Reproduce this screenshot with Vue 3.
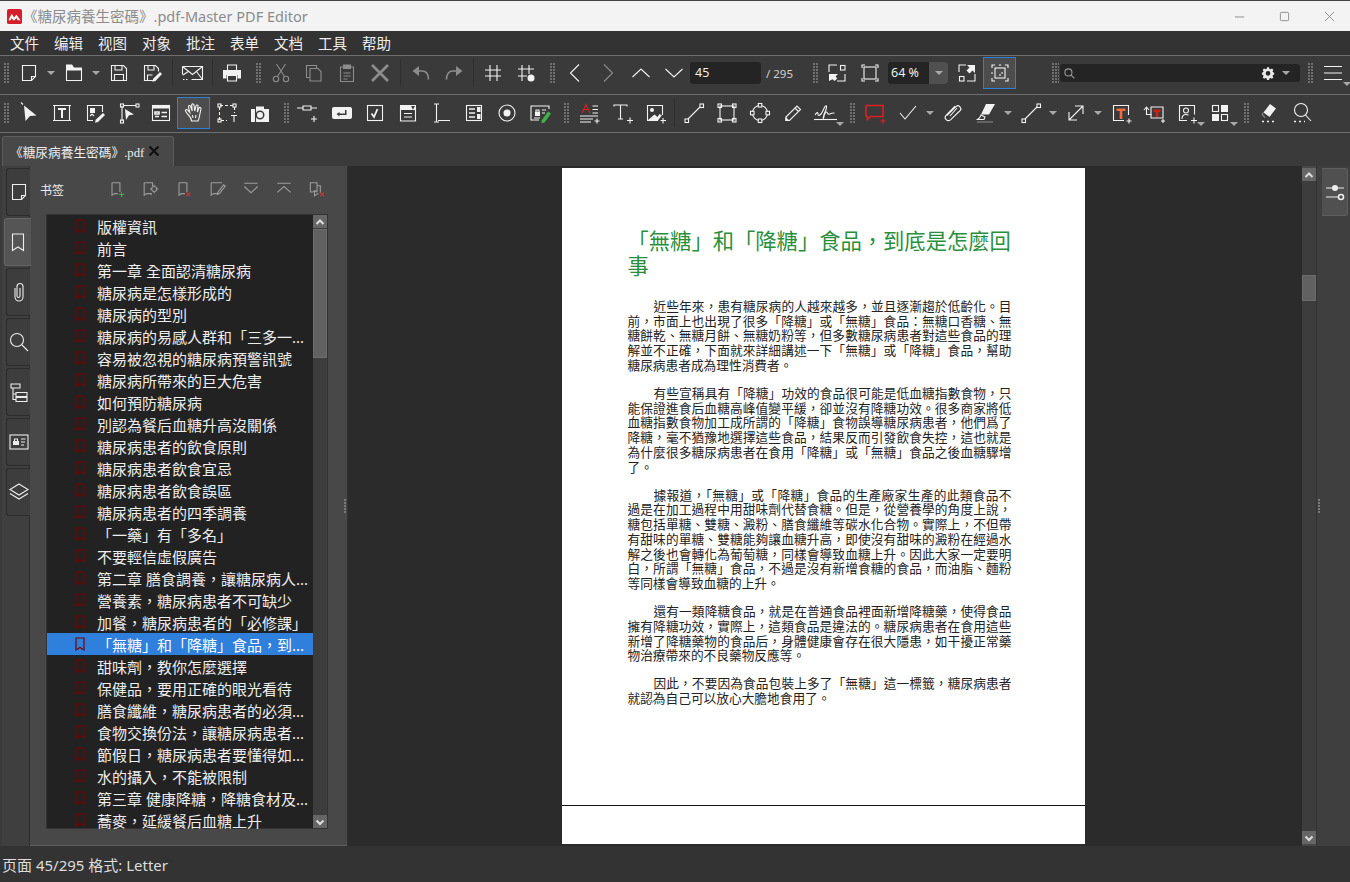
<template>
  <div class="app">
    <header class="titlebar">
      <svg class="logo" viewBox="0 0 16 16">
        <rect width="16" height="16" rx="2" fill="#d3202a" />
        <path d="M1.500 12 5 5l2.500 4L10 6l4.500 6h-3L10 9.500 8 12H6.500L5 9.500 3.800 12z" fill="#fff" />
      </svg>
      <span class="title">《糖尿病養生密碼》.pdf-Master PDF Editor</span>
      <div class="winctl">
        <svg viewBox="0 0 12 12"><path d="M1 6.500h10" /></svg>
        <svg viewBox="0 0 12 12"><rect x="1.500" y="1.500" width="9" height="9" rx="1" /></svg>
        <svg viewBox="0 0 12 12"><path d="M1 1l10 10M11 1 1 11" /></svg>
      </div>
    </header>

    <nav class="menubar">
      <span v-for="m in menus" :key="m">{{ m }}</span>
    </nav>

    <div class="toolbar toolbar-one">
      <template v-for="(it, i) in toolbarOne" :key="i">
        <span v-if="it === '|'" class="sep"></span>
        <span v-else-if="it === '!'" class="sep narrow"></span>
        <span v-else-if="it === ':'" class="grip"></span>
        <span v-else-if="it === 'v'" class="dd"></span>
        <div v-else-if="it === 'page'" class="pagebox">
          <div class="field pagefield">45</div>
          <span class="pagecount">/ 295</span>
          <span class="grip grip-page"></span>
        </div>
        <div v-else-if="it === 'zoom'" class="zoomcombo">
          <span class="zoomval">64 %</span>
          <span class="zoombtn"><span class="dd"></span></span>
        </div>
        <div v-else-if="it === 'search'" class="searchwrap">
          <span class="grip grip-search"></span>
          <div class="field searchbox">
            <svg class="ico-s" viewBox="0 0 24 24" fill="none" stroke="currentColor" stroke-width="2" v-html="icons.search"></svg>
            <svg class="gear" viewBox="0 0 24 24" v-html="icons.gear"></svg>
            <span class="dd"></span>
          </div>
          <span class="grip grip-end"></span>
          <span class="btn burger">
            <svg class="ico" viewBox="0 0 24 24" fill="none" stroke="currentColor" stroke-width="1.100" v-html="icons.burger"></svg>
            <span class="dd dd-corner"></span>
          </span>
        </div>
        <span v-else class="btn" :class="{ active: it.endsWith('*'), dim: it.endsWith('~') }">
          <svg class="ico" viewBox="0 0 24 24" fill="none" stroke="currentColor" stroke-width="1.100" v-html="icons[it.replace(/[*~]$/, '')]"></svg>
        </span>
      </template>
    </div>

    <div class="toolbar toolbar-two">
      <template v-for="(it, i) in toolbarTwo" :key="i">
        <span v-if="it === '!'" class="sep narrow"></span>
        <span v-else-if="it === ':'" class="grip"></span>
        <span v-else-if="it === 'v'" class="dd"></span>
        <span v-else class="btn" :class="{ active: it.endsWith('*') }">
          <svg class="ico" viewBox="0 0 24 24" fill="none" stroke="currentColor" stroke-width="1.100" v-html="icons[it.replace(/[*~]$/, '')]"></svg>
          <span v-if="cornerDrop.includes(it)" class="dd dd-corner"></span>
        </span>
      </template>
    </div>

    <div class="tabrow">
      <div class="tab">
        <span>《糖尿病養生密碼》.pdf</span>
        <svg class="tabclose" viewBox="0 0 12 12"><path d="M1.500 1.500l9 9M10.500 1.500l-9 9" /></svg>
      </div>
    </div>

    <main class="main">
      <aside class="rail">
        <span v-for="r in railIcons" :key="r" class="railtab" :class="{ on: r === 'bookmark' }">
          <svg class="ico" viewBox="0 0 24 24" fill="none" stroke="currentColor" stroke-width="1.100" v-html="icons[r]"></svg>
        </span>
      </aside>

      <section class="panel">
        <div class="panelhead">
          <span class="paneltitle">书签</span>
          <div class="panelbtns">
            <svg v-for="p in panelIcons" :key="p" class="pico" viewBox="0 0 24 24" fill="none" stroke="currentColor" stroke-width="1.300" v-html="icons[p]"></svg>
          </div>
        </div>
        <div class="tree">
          <ul class="rows">
            <li v-for="(b, i) in bookmarks" :key="i" class="row" :class="{ sel: i === 19 }">
              <svg class="bm" viewBox="0 0 10 14"><path d="M1 1h8v12L5 10.500 1 13z" /></svg>
              <span>{{ b }}</span>
            </li>
          </ul>
          <div class="vbar">
            <span class="sbtn"><svg viewBox="0 0 12 12"><path d="M2.500 8 6 4.500 9.500 8" /></svg></span>
            <span class="sthumb tree-thumb"></span>
            <span class="strack"></span>
            <span class="sbtn"><svg viewBox="0 0 12 12"><path d="M2.500 4.500 6 8l3.500-3.500" /></svg></span>
          </div>
        </div>
        <span class="splitdots"></span>
      </section>

      <section class="doc">
        <article class="page">
          <h1 class="heading">{{ headingOne }}<br />事</h1>
          <div v-for="(para, i) in paragraphs" :key="i" class="para">
            <div
              v-for="(line, j) in para"
              :key="j"
              class="line"
              :class="{ first: j === 0, full: j < para.length - 1 }"
            >{{ line }}</div>
          </div>
        </article>
        <div class="nextpage"></div>
      </section>

      <div class="vbar docbar">
        <span class="sbtn"><svg viewBox="0 0 12 12"><path d="M2.500 8 6 4.500 9.500 8" /></svg></span>
        <span class="strack short"></span>
        <span class="sthumb doc-thumb"></span>
        <span class="strack"></span>
        <span class="sbtn"><svg viewBox="0 0 12 12"><path d="M2.500 4.500 6 8l3.500-3.500" /></svg></span>
      </div>

      <aside class="rightrail">
        <span class="splitdots right"></span>
        <span class="railtab righttab">
          <svg class="ico" viewBox="0 0 24 24" fill="none" stroke="currentColor" stroke-width="1.100" v-html="icons.sliders"></svg>
        </span>
      </aside>
    </main>

    <footer class="status">页面 45/295 格式: Letter</footer>
  </div>
</template>

<script setup>
const menus = ['文件', '编辑', '视图', '对象', '批注', '表单', '文档', '工具', '帮助']

const toolbarOne = [
  ':', 'new', 'v', 'open', 'v', 'save', 'saveas', '|', 'mail', '!', 'print', ':',
  'cut~', 'copy~', 'paste~', 'del~', '|', 'undo~', 'redo~', '!', 'grid', 'griddot', ':',
  'left', 'right~', 'up', 'down', 'page', 'fitw', 'fit', 'zoom', 'fullscreen', 'actual*', 'search'
]

const toolbarTwo = [
  ':', 'arrow', 'textbox', 'editimg', 'vertex', 'form', 'hand*', 'crop', 'camera', ':',
  'link', 'button', 'check', 'combo', 'field', 'list', 'radio', 'secure', ':',
  'addtext', 'typewriter', 'addimg', '!', 'line', 'rect', 'circle', 'pencil', 'sign', ':',
  'comment', 'tick', 'v', 'clip', 'marker', 'v', 'line', 'v', 'double', 'v',
  'redT', 'cropT', 'stamp', 'tiles', ':', 'eraser', 'findtool'
]

const cornerDrop = ['sign', 'stamp', 'tiles']

const railIcons = ['new', 'bookmark', 'paperclip', 'search', 'tree', 'idcard', 'layers']

const panelIcons = ['bmadd', 'bmgo', 'bmdel', 'bmedit', 'downbar', 'upbar', 'bmcopy']

const fill = 'fill="currentColor" stroke="none"'
const corners = 'M4 7V4h3M17 4h3v3M20 17v3h-3M7 20H4v-3'

const icons = {
  new: '<path d="M5.500 4.500h13v11l-4 4h-9z"/><path d="M18.500 15.500h-4v4"/>',
  open: `<path d="M4.500 9h15v10.500h-15z"/><path ${fill} d="M4 3.500h6l2 3h8V9H4z"/>`,
  save: '<path d="M4.500 4.500h12l3 3v12h-15z"/><path d="M8 4.500V9h7V4.500M7.500 19.500v-6h9v6"/>',
  saveas: `<path d="M13 19.500H4.500v-15h11l3 3v3"/><path d="M8 4.500V9h6V4.500M7.500 19v-5h5"/><path ${fill} d="M20 11l2 2-6.500 7-3 .8.700-3z"/>`,
  mail: '<path d="M1.500 5.500h20v13h-11"/><path d="M1.500 5.500v8M1.500 5.500l10 8 10-8M21.500 18.500 15 10M8 10 2 14"/><path stroke-dasharray="1.500 1.500" d="M2 18.500h6"/>',
  print: `<path d="M7.500 9V4h9v5"/><path ${fill} d="M3 9h18v8.500h-3.500V14h-11v3.500H3z"/><path d="M7.500 14.500h9V20h-9z"/>`,
  cut: '<circle cx="7" cy="18" r="2.700"/><circle cx="17" cy="18" r="2.700"/><path d="M8.500 15.500 16.500 3M15.500 15.500 7.500 3"/>',
  copy: '<path d="M14.500 7V4.500h-10v12H8"/><path d="M8 7.500h8l3 3v9.500H8z"/>',
  paste: `<path d="M8 6H5.500v14.500h13V6H16"/><path ${fill} d="M8 3.500h8V8H8z"/><path d="M8.500 12h7M8.500 15h7M8.500 18h4"/>`,
  del: '<path stroke-width="2.800" d="M4 4l16 16M20 4 4 20"/>',
  undo: `<path d="M9 10h4c4 0 6.500 3 6.500 8.500" stroke-width="1.600"/><path ${fill} d="M10 5v10L3.500 10z"/>`,
  redo: `<path d="M15 10h-4c-4 0-6.500 3-6.500 8.500" stroke-width="1.600"/><path ${fill} d="M14 5v10l6.500-5z"/>`,
  grid: '<path d="M9 4v16M16 4v16M4 9h16M4 15h16"/>',
  griddot: `<path d="M8 4v16M15 4v9M4 8h16M4 15h9"/><circle ${fill} cx="17" cy="17" r="3.500"/>`,
  left: '<path d="M16 3.500 7.500 12l8.500 8.500"/>',
  right: '<path d="M8 3.500 16.500 12 8 20.500"/>',
  up: '<path d="M3.500 16 12 8l8.500 8"/>',
  down: '<path d="M3.500 8 12 16l8.500-8"/>',
  upbar: '<path d="M4 5h16M4 16l8-7 8 7"/>',
  downbar: '<path d="M4 5h16M4 9l8 7.500L20 9"/>',
  fitw: `<path d="M4 11V4h8M20 13v7h-8"/><rect x="15.500" y="4.500" width="4.500" height="4.500"/><path ${fill} d="M4 13h9l-2.500 2.500 1.800 2L9.500 20 7.500 18.200 4 20z"/>`,
  fit: `<path d="${corners}"/><rect x="6" y="6" width="12" height="12"/>`,
  fullscreen: `<path d="M4 11V4h7M20 13v7h-8"/><rect x="4.500" y="15.500" width="4.500" height="4.500"/><path ${fill} d="M12 4h8v8l-2.500-2.500-3 3-3-3 3-3z"/>`,
  actual: `<path d="${corners}"/><rect x="7" y="7" width="10" height="10"/><path stroke-dasharray="2 8" d="M3 12h18M12 3v18"/>`,
  burger: '<path d="M3 5.500h18M3 12h18M3 18.500h18"/>',
  search: '<circle cx="10" cy="10" r="6.500"/><path d="M15 15l6 6"/>',
  gear: `<path fill="#e8e8e8" fill-rule="evenodd" d="M10 2h4l.6 3 2.400 1 2.600-1.700 2.800 2.800L20.700 9.700l1 2.300 2.300.6v3.800l-2.300.6-1 2.300 1.700 2.600-2.800 2.800-2.600-1.700-2.400 1-.6 3h-4l-.6-3-2.400-1-2.600 1.700-2.800-2.800 1.700-2.600-1-2.300L0 16.400v-3.800l2.300-.6 1-2.300L1.600 7.100l2.800-2.800L7 6l2.400-1zM12 9.500a4.500 4.500 0 1 0 0 9 4.500 4.500 0 0 0 0-9z" transform="translate(1.500 .3) scale(.88)"/>`,
  arrow: `<path ${fill} d="M7 4.500 19.500 14.500 13 15 8.500 20z"/><path d="M4 1.500l2 2"/>`,
  textbox: '<path d="M4.500 4v16M19.500 4v16M3 4.500h18M3 19.500h18"/><path stroke-width="2" d="M8 8h8M12 8v9"/>',
  editimg: `<path d="M19.500 11V4.500h-15v15H10"/><rect ${fill} x="7" y="7" width="5" height="5"/><path ${fill} d="M20 12l2 2-7 7-3 .8.700-3z"/><path d="M7 15l2-2 2 2"/>`,
  vertex: `<path d="M6 5v15M8 4.500h12"/><path ${fill} d="M9 8l9 5.500-5 .8-3 4.700z"/><rect x="4.500" y="3" width="3" height="3"/><rect x="20" y="3" width="3" height="3"/><rect x="4.500" y="19" width="3" height="3"/>`,
  form: `<rect x="3.500" y="4.500" width="17" height="15"/><path ${fill} d="M3.500 4.500h17v3h-17z"/><path stroke-width="1.600" d="M6 11h4v2H6zM6 15.500h4M12.500 11.500H18M12.500 15.500H18"/>`,
  hand: '<path d="M6.500 14c-1-1-2.500-3-3-4s1-2 2-1l2.300 2.500L6.500 6c-.3-1.500 1.500-2 2-.7l1.700 4.700-.5-6c0-1.500 2-1.500 2.300 0l.7 6L14 5c.3-1.500 2.300-1 2-.2l-.7 6.200 1.700-4c.5-1.200 2.200-.6 2 .6L17.500 15c-.5 3-1.500 5-1.500 5H9.500c0-2-1.500-4.500-3-6z"/><path d="M10.500 14l.5 3M14 14l-.5 3"/>',
  crop: '<path stroke-dasharray="3 2" d="M5 4.500h14M4.500 6v13M19.500 6v6M6 19.500h6"/><rect x="3" y="3" width="3" height="3"/><rect x="18" y="3" width="3" height="3"/><rect x="3" y="18" width="3" height="3"/><path d="M16 14.500h6M19 14.500V21"/>',
  camera: `<path ${fill} fill-rule="evenodd" d="M3 8h5V5.500h8V8h5v13H3zM12 9.500a4.500 4.500 0 1 0 0 9 4.500 4.500 0 0 0 0-9zM12 11a3 3 0 1 1 0 6 3 3 0 0 1 0-6z"/><path d="M7.500 8v13" stroke="#3a3a3a"/>`,
  link: '<path d="M0 7h6M14 7h6M6 5h8v4H6z"/><path d="M14 18h6M17 15v6"/>',
  button: `<path ${fill} fill-rule="evenodd" d="M4 6h16a2 2 0 0 1 2 2v8a2 2 0 0 1-2 2H4a2 2 0 0 1-2-2V8a2 2 0 0 1 2-2zM15 9v3.500H9.500V11L6.500 13l3 2.500V14H16.500V9z"/>`,
  check: '<rect x="4.500" y="4.500" width="15" height="15"/><path stroke-width="1.800" d="M8.500 12.500l2.500 3.500 3.500-8"/>',
  combo: `<path d="M4.500 6v14h15V6"/><path ${fill} d="M4 4h16v5H4z"/><path d="M8 12.500h8M8 16h8"/><path stroke="#3a3a3a" d="M16 5.500h2l-1 2z"/>`,
  field: '<path d="M5 3h5M7.500 3v18M5 21h5M9 19.500h12"/>',
  list: `<rect x="4.500" y="4.500" width="15" height="15"/><path stroke-width="1.500" d="M7 8h6M7 12h6M7 16h6"/><path ${fill} d="M15 6h3.500v5H15zM15 13h3.500v5H15z"/>`,
  radio: `<circle cx="12" cy="12" r="8"/><circle ${fill} cx="12" cy="12" r="3.500"/>`,
  secure: `<path d="M21 8V5H3v14h8"/><path ${fill} d="M7 10.500h5V15H7z"/><path d="M8 10.500V9h3v1.500M14 9h4M14 12h3M6 17h6"/><path fill="#3fb24c" stroke="none" d="M20 10.500l3 2-6.500 9-3 .8.300-3z"/>`,
  addtext: '<path stroke="#e02020" d="M5 12l4-8.500L13 12M6.500 8.500h5"/><path d="M15.500 5H21M15.500 8.500H21M15.500 12H21M3 15h18M3 18h13M3 21h11M17.500 20h5M20 17.500v5"/>',
  typewriter: '<path d="M4 5.500V4h13v1.500M10.500 4v14M8 18h5"/><path d="M17 19.500h6M20 16.500v6"/>',
  addimg: `<path d="M15 19.500H4.500v-15h15V14"/><circle ${fill} cx="9" cy="9" r="2"/><path ${fill} d="M4.500 19.500l7-6 3 2.500 2-3 2.500 1.500V14l-4 5.500z"/><path d="M17.500 19.500h5.500M20 17v5.500"/>`,
  line: '<rect x="3" y="18" width="3.500" height="3.500"/><rect x="18" y="3" width="3.500" height="3.500"/><path d="M6 18 18 6"/>',
  rect: '<rect x="5" y="5" width="14" height="14"/><rect x="3" y="3" width="3.500" height="3.500"/><rect x="17.500" y="3" width="3.500" height="3.500"/><rect x="3" y="17.500" width="3.500" height="3.500"/><rect x="17.500" y="17.500" width="3.500" height="3.500"/>',
  circle: '<circle cx="12" cy="12" r="7.500"/><rect x="10.300" y="2.500" width="3.500" height="3.500" fill="#3a3a3a"/><rect x="10.300" y="18" width="3.500" height="3.500" fill="#3a3a3a"/><rect x="2.500" y="10.300" width="3.500" height="3.500" fill="#3a3a3a"/><rect x="18" y="10.300" width="3.500" height="3.500" fill="#3a3a3a"/>',
  pencil: '<path d="M5 16 16 5l3.500 3.500-11 11H5zM14 7l3.500 3.500"/><path fill="currentColor" d="M5 19.500V17l2.500 2.500z"/>',
  sign: '<path d="M1 14c2-3 3-3 3-1s1 2 3 0 3-7 4.500-8 1.500 2-.5 6-2 8-1.500 6 2-6 3-6 1 3 3 2 2-1 5-1"/><path d="M0 18.500h23"/>',
  comment: '<path stroke="#e02020" stroke-width="1.500" d="M3 4.500h17v11H7.500l-3 3v-3H3z"/><path stroke="#e02020" d="M17.500 20h5M20 17.500v5"/>',
  tick: '<path d="M4 12l5 6L20 5"/>',
  clip: '<path d="M6 15 15 5c2-2 6 1.500 4 4l-9 10c-3 2.500-7-1-5-4l8.500-10" transform="rotate(4 12 12)"/><path d="M9 15l7-8"/>',
  paperclip: '<path d="M8 8v9a4 4 0 0 0 8 0V6.500a3 3 0 0 0-6 0V16a1.500 1.500 0 0 0 3 0V8"/>',
  marker: `<path ${fill} d="M12 3h9l-6 10.500H7z"/><path d="M7 14l-1.500 3-2 1.500h6.500L11 16z"/><path stroke="#888" d="M3 21h16"/>`,
  double: '<path d="M5 19 19 5M11 5h8v8M13 19H5v-8"/>',
  redT: `<path d="M4 4.500h16M4 19.500h11M4.500 4v16M19.500 4v10"/><path fill="#f06a3c" stroke="none" d="M7.500 7.500h9V10H13.300v8h-2.600v-8H7.500z"/><path d="M17.500 20h5M20 17.500v5"/>`,
  cropT: '<path d="M2 9l2.500-3L7 9M4.500 6v7.500h5"/><path d="M9 6h12v11H9z"/><path fill="#d02010" stroke="none" d="M11.500 8.500h7V11h-2.200v5h-2.600v-5h-2.200z"/><path d="M19 20h4M21 18v4"/>',
  stamp: '<path d="M4.500 4.500h15v9M4.500 4v16M4 19.500h8"/><circle cx="11" cy="9.500" r="2.500"/><path d="M7 18c0-3 2-4.500 4-4.500 1 0 2 .3 2.500.7"/><path d="M16 19.500h6M19 16.500v6"/>',
  tiles: `<rect x="4.500" y="4.500" width="6" height="6"/><rect ${fill} x="13" y="4" width="7" height="7"/><rect ${fill} x="4" y="13" width="7" height="7"/><rect x="13.500" y="13.500" width="6" height="6"/>`,
  eraser: `<path ${fill} d="M13 3l6 4.500-6.500 8.500-6-4.500z"/><path stroke="#888" d="M6.500 11.500 5 13.500l3 3"/><path stroke-dasharray="2 3" stroke-width="1.600" d="M5 20.500h14"/>`,
  findtool: '<circle cx="11" cy="9" r="6.500"/><path d="M15.500 14l5.500 6"/><path stroke-dasharray="2 3" stroke-width="1.600" d="M4 20.500h11"/>',
  bookmark: '<path d="M6.500 4h11v16.500L12 17l-5.500 3.500z"/>',
  tree: '<path d="M4 4h9v4H4zM9 12.500h11v4H9zM9 17.500h11v4H9zM6 8v11.500h3M6 14h3"/>',
  idcard: `<rect x="3" y="5" width="18" height="14"/><path ${fill} d="M6 11h6v4H6z"/><path d="M7.500 11V9h3v2M14 9h4.500M14 12h4M14 15h3"/>`,
  layers: '<path d="M12 4l9 5.500-9 5.500-9-5.500zM3 13.500 12 19l9-5.500"/>',
  sliders: `<path d="M3 8h18M3 17h14"/><circle ${fill} cx="12" cy="8" r="3"/><circle fill="#4a4a4a" cx="18" cy="17" r="2.500" stroke-width="1.600"/>`,
  bmadd: '<path d="M6 4.500h9.500v11M6 4.500v15l3-2h4"/><path stroke="#3fb24c" d="M14.500 18.500h6M17.500 15.500v6"/>',
  bmgo: '<path d="M5 4.500h10v4M5 4.500v15l3-2h5.500v2"/><circle cx="17" cy="12" r="3"/><path d="M12 12h2M20 12h2M17 7v2M17 15v2"/>',
  bmdel: '<path d="M6 4.500h9.500v11M6 4.500v15l3-2h4"/><path stroke="#d83030" d="M15 16l4.500 4.500M19.500 16 15 20.500"/>',
  bmedit: '<path d="M5 4.500h13M5 4.500v15l3-2h6"/><path d="M13 16l7-9 2 1.500-7 9-2.500 1z"/>',
  bmcopy: '<path d="M4 4.500h8v11l-2.500-1.500L7 15.500H4zM12 8h4v9M9 15v5l3-2h2"/><path stroke="#d83030" d="M16 16l4.500 4.500M20.500 16 16 20.500"/>'
}

// the book's text is set with full-width CJK punctuation
const cjk = (s) => s.replace(/,/g, '\uFF0C').replace(/:/g, '\uFF1A')

const headingOne = cjk('「無糖」和「降糖」食品,到底是怎麼回')

const bookmarks = [
  '版權資訊', '前言', '第一章 全面認清糖尿病', '糖尿病是怎樣形成的', '糖尿病的型別',
  '糖尿病的易感人群和「三多一...', '容易被忽視的糖尿病預警訊號', '糖尿病所帶來的巨大危害', '如何預防糖尿病',
  '別認為餐后血糖升高沒關係', '糖尿病患者的飲食原則', '糖尿病患者飲食宜忌', '糖尿病患者飲食誤區',
  '糖尿病患者的四季調養', '「一藥」有「多名」', '不要輕信虛假廣告', '第二章 膳食調養,讓糖尿病人...',
  '營養素,糖尿病患者不可缺少', '加餐,糖尿病患者的「必修課」', '「無糖」和「降糖」食品,到...',
  '甜味劑,教你怎麼選擇', '保健品,要用正確的眼光看待', '膳食纖維,糖尿病患者的必須...',
  '食物交換份法,讓糖尿病患者...', '節假日,糖尿病患者要懂得如...', '水的攝入,不能被限制',
  '第三章 健康降糖,降糖食材及...', '蕎麥,延緩餐后血糖上升'
].map(cjk)

const paragraphs = [
  [
    '近些年來,患有糖尿病的人越來越多,並且逐漸趨於低齡化。目',
    '前,市面上也出現了很多「降糖」或「無糖」食品:無糖口香糖、無',
    '糖餅乾、無糖月餅、無糖奶粉等,但多數糖尿病患者對這些食品的理',
    '解並不正確,下面就來詳細講述一下「無糖」或「降糖」食品,幫助',
    '糖尿病患者成為理性消費者。'
  ],
  [
    '有些宣稱具有「降糖」功效的食品很可能是低血糖指數食物,只',
    '能保證進食后血糖高峰值變平緩,卻並沒有降糖功效。很多商家將低',
    '血糖指數食物加工成所謂的「降糖」食物誤導糖尿病患者,他們爲了',
    '降糖,毫不猶豫地選擇這些食品,結果反而引發飲食失控,這也就是',
    '為什麼很多糖尿病患者在食用「降糖」或「無糖」食品之後血糖驟增',
    '了。'
  ],
  [
    '據報道,「無糖」或「降糖」食品的生產廠家生產的此類食品不',
    '過是在加工過程中用甜味劑代替食糖。但是,從營養學的角度上說,',
    '糖包括單糖、雙糖、澱粉、膳食纖維等碳水化合物。實際上,不但帶',
    '有甜味的單糖、雙糖能夠讓血糖升高,即使沒有甜味的澱粉在經過水',
    '解之後也會轉化為葡萄糖,同樣會導致血糖上升。因此大家一定要明',
    '白,所謂「無糖」食品,不過是沒有新增食糖的食品,而油脂、麵粉',
    '等同樣會導致血糖的上升。'
  ],
  [
    '還有一類降糖食品,就是在普通食品裡面新增降糖藥,使得食品',
    '擁有降糖功效,實際上,這類食品是違法的。糖尿病患者在食用這些',
    '新增了降糖藥物的食品后,身體健康會存在很大隱患,如干擾正常藥',
    '物治療帶來的不良藥物反應等。'
  ],
  [
    '因此,不要因為食品包裝上多了「無糖」這一標籤,糖尿病患者',
    '就認為自己可以放心大膽地食用了。'
  ]
].map((para) => para.map(cjk))
</script>

<style>
html, body { margin: 0; background: #3a3a3a; }
</style>

<style scoped>
.app {
  width: 1350px;
  height: 882px;
  display: flex;
  flex-direction: column;
  overflow: hidden;
  background: #3a3a3a;
  color: #eee;
  font-family: "Noto Sans", "Noto Sans CJK TC", sans-serif;
}

.titlebar {
  height: 30px;
  flex: none;
  display: flex;
  align-items: center;
  background: #f3f3f3;
  border-top: 1px solid #444;
  color: #8b8b8b;
}

.logo { width: 15px; height: 15px; margin: 0 3px 0 7px; }
.title { font-size: 14.500px; margin-left: -2px; padding-bottom: 2px; }

.winctl { margin-left: auto; display: flex; gap: 34px; padding-right: 15px; }
.winctl svg { width: 11px; height: 11px; fill: none; stroke: #8a8a8a; stroke-width: 1; }

.menubar {
  height: 24px;
  flex: none;
  display: flex;
  align-items: center;
  gap: 15px;
  padding: 0 0 2px 10px;
  box-sizing: border-box;
  background: #333;
  font-family: "Noto Sans CJK SC", sans-serif;
  font-size: 14.500px;
}

.toolbar {
  height: 39px;
  flex: none;
  display: flex;
  align-items: center;
  box-sizing: border-box;
  border-top: 1px solid #6e6e6e;
  background: #3a3a3a;
}

.toolbar-one { padding-bottom: 4px; }
.toolbar-two { height: 38px; padding-bottom: 1px; }

.btn {
  width: 33px;
  height: 32px;
  flex: none;
  position: relative;
  display: flex;
  align-items: center;
  justify-content: center;
  color: #f2f2f2;
  box-sizing: border-box;
}

.btn.dim { color: #8c8c8c; }
.btn.active { background: #4d4d4d; border: 1px solid #2f7fd6; }

.ico { width: 24px; height: 24px; flex: none; }

.sep {
  width: 8px;
  height: 28px;
  flex: none;
  background: linear-gradient(#2f2f2f, #2f2f2f) center / 1px 100% no-repeat;
}

.sep.narrow { width: 6px; }

.dd {
  width: 12px;
  height: 10px;
  flex: none;
  position: relative;
}

.dd::after {
  content: "";
  position: absolute;
  left: 2px;
  top: 3px;
  border-left: 4px solid transparent;
  border-right: 4px solid transparent;
  border-top: 4px solid #a8a8a8;
}

.dd-corner { position: absolute; right: -4px; bottom: 0; }

.grip {
  width: 16px;
  height: 20px;
  flex: none;
  background-image: conic-gradient(from 270deg at 2px 2px, #707070 25%, transparent 0);
  background-size: 3px 3px;
  background-clip: content-box;
  background-origin: content-box;
  padding-left: 8px;
  padding-right: 3px;
  box-sizing: border-box;
}

.toolbar > .grip:first-child { width: 12px; padding-left: 4px; }

.field { background: #242424; border-radius: 3px; }

.pagebox { display: flex; align-items: center; flex: none; }
.pagefield {
  width: 71px;
  height: 22px;
  line-height: 22px;
  padding-left: 5px;
  box-sizing: border-box;
  font-size: 12.500px;
}
.pagecount { width: 36px; padding-left: 5px; box-sizing: border-box; font-size: 11.500px; color: #d0d0d0; }
.grip-page { width: 23px; padding-left: 16px; padding-right: 2px; }

.zoomcombo {
  width: 60px;
  height: 22px;
  margin: 0 2px;
  flex: none;
  display: flex;
  background: #242424;
  border-radius: 3px;
  overflow: hidden;
  font-size: 12.500px;
  line-height: 22px;
}
.zoomval { flex: 1; padding-left: 3px; }
.zoombtn { width: 19px; background: #505050; display: flex; align-items: center; justify-content: center; }

.searchwrap { flex: 1; display: flex; align-items: center; height: 100%; padding-left: 35px; }
.grip-search { width: 9px; padding-left: 1px; padding-right: 1px; }
.searchbox {
  width: 240px;
  height: 18px;
  flex: none;
  display: flex;
  align-items: center;
  padding: 0 8px 0 3px;
  box-sizing: border-box;
  color: #9a9a9a;
}
.ico-s { width: 13px; height: 13px; }
.gear { width: 14px; height: 14px; margin-left: auto; margin-right: 5px; }
.grip-end { width: 11px; margin-left: 4px; padding-left: 4px; padding-right: 2px; }
.burger { margin-left: 1px; }

.tabrow {
  height: 34px;
  flex: none;
  display: flex;
  align-items: flex-end;
  padding-left: 2px;
  box-sizing: border-box;
  border-top: 1px solid #6e6e6e;
}

.tab {
  width: 172px;
  height: 30px;
  display: flex;
  align-items: center;
  gap: 4px;
  padding-left: 7px;
  padding-bottom: 1px;
  box-sizing: border-box;
  background: #484848;
  border: 1px solid #5c5c5c;
  border-bottom: none;
  border-radius: 3px 3px 0 0;
  font-family: "Liberation Serif", "Noto Sans CJK TC", serif;
  font-size: 12.700px;
}

.tabclose { width: 12px; height: 12px; fill: none; stroke: #111; stroke-width: 2.200; }

.main {
  flex: 1;
  min-height: 0;
  display: flex;
  background: #484848;
}

.rail {
  width: 30px;
  flex: none;
  box-sizing: border-box;
  padding: 2px 0 0 4px;
  display: flex;
  flex-direction: column;
  gap: 2px;
  background: #3f3f3f;
  border-left: 2px solid #3a3a3a;
  border-right: 1px solid #2e2e2e;
}

.railtab {
  width: 24px;
  height: 48px;
  flex: none;
  display: flex;
  align-items: center;
  justify-content: center;
  box-sizing: border-box;
  background: #3d3d3d;
  border: 1px solid #2c2c2c;
  border-right: none;
  border-radius: 3px 0 0 3px;
  color: #ededed;
}

.railtab.on {
  width: 27px;
  margin-left: -2px;
  background: #555;
  border-color: #666;
  position: relative;
  z-index: 1;
}

.panel {
  width: 317px;
  flex: none;
  position: relative;
  box-sizing: border-box;
  padding: 0 19px 0 16px;
  display: flex;
  flex-direction: column;
  background: #484848;
  border-bottom: 1px solid #5e5e5e;
}

.panelhead {
  height: 48px;
  flex: none;
  display: flex;
  align-items: center;
  margin-left: -6px;
  padding-bottom: 2px;
  box-sizing: border-box;
}
.paneltitle { width: 67px; font-size: 12px; font-family: "Noto Sans CJK SC", sans-serif; }
.panelbtns { display: flex; gap: 13.400px; color: #9c9c9c; }
.pico { width: 20px; height: 20px; flex: none; }

.tree {
  height: 615px;
  flex: none;
  display: flex;
  background: #222;
  border: 1px solid #333;
  box-sizing: border-box;
}

.rows { flex: 1; margin: 0; padding: 0; list-style: none; }

.row {
  height: 22px;
  display: flex;
  align-items: center;
  padding-left: 28px;
  font-size: 15px;
  white-space: nowrap;
  color: #eee;
}

.row.sel { background: #2f80dc; color: #fff; }

.bm { width: 10px; height: 14px; margin-right: 12px; flex: none; fill: none; stroke: #720404; stroke-width: 1.200; }

.vbar {
  width: 14px;
  flex: none;
  display: flex;
  flex-direction: column;
  background: #3d3d3d;
}

.sbtn {
  height: 13px;
  flex: none;
  display: flex;
  align-items: center;
  justify-content: center;
  background: #666;
}

.sbtn svg { width: 12px; height: 12px; fill: none; stroke: #ddd; stroke-width: 2; }

.sthumb { flex: none; background: #616161; border: 1px solid #6c6c6c; box-sizing: border-box; }
.tree-thumb { height: 129px; margin-top: 1px; }
.strack { flex: 1; }
.strack.short { flex: none; height: 94px; }

.splitdots {
  position: absolute;
  right: 0;
  top: 333px;
  width: 3px;
  height: 15px;
  background: conic-gradient(from 270deg at 2px 2px, #7a7a7a 25%, transparent 0) 0 0 / 3px 3px;
}

.doc {
  flex: 1;
  min-width: 0;
  overflow: hidden;
  padding: 2px 4px 2px 0;
  display: flex;
  flex-direction: column;
  align-items: center;
  background: #2b2b2b;
  border-left: 1px solid #333;
}

.page {
  width: 523px;
  height: 638px;
  flex: none;
  box-sizing: border-box;
  padding: 59px 73px 0 66px;
  background: #fff;
  color: #222;
  border-bottom: 1px solid #111;
  font-family: "Noto Sans CJK TC", sans-serif;
}

.heading {
  margin: 0 0 22px;
  font-size: 21.300px;
  line-height: 25px;
  font-weight: 400;
  color: #2a8f3c;
  white-space: nowrap;
}

.para { margin-bottom: 13.500px; font-size: 12.700px; line-height: 14.700px; }
.line { white-space: nowrap; }
.line.full { text-align: justify; text-align-last: justify; white-space: normal; }
.line.first { padding-left: 26px; }

.nextpage { width: 523px; flex: 1; background: #fff; }

.docbar { height: 676px; margin-top: 2px; }
.docbar .doc-thumb { height: 26px; }

.rightrail {
  width: 34px;
  flex: none;
  position: relative;
  box-sizing: border-box;
  padding: 2px 0 0 4px;
  background: #3f3f3f;
  border-left: 1px solid #333;
}

.righttab {
  width: 26px;
  background: #505050;
  border: 1px solid #5e5e5e;
  border-left: none;
  border-radius: 0 3px 3px 0;
  margin-left: 1px;
}

.splitdots.right { left: 1px; right: auto; }

.status {
  height: 36px;
  flex: none;
  display: flex;
  align-items: center;
  padding-left: 2px;
  background: #333;
  font-size: 15px;
  color: #ddd;
}
</style>
